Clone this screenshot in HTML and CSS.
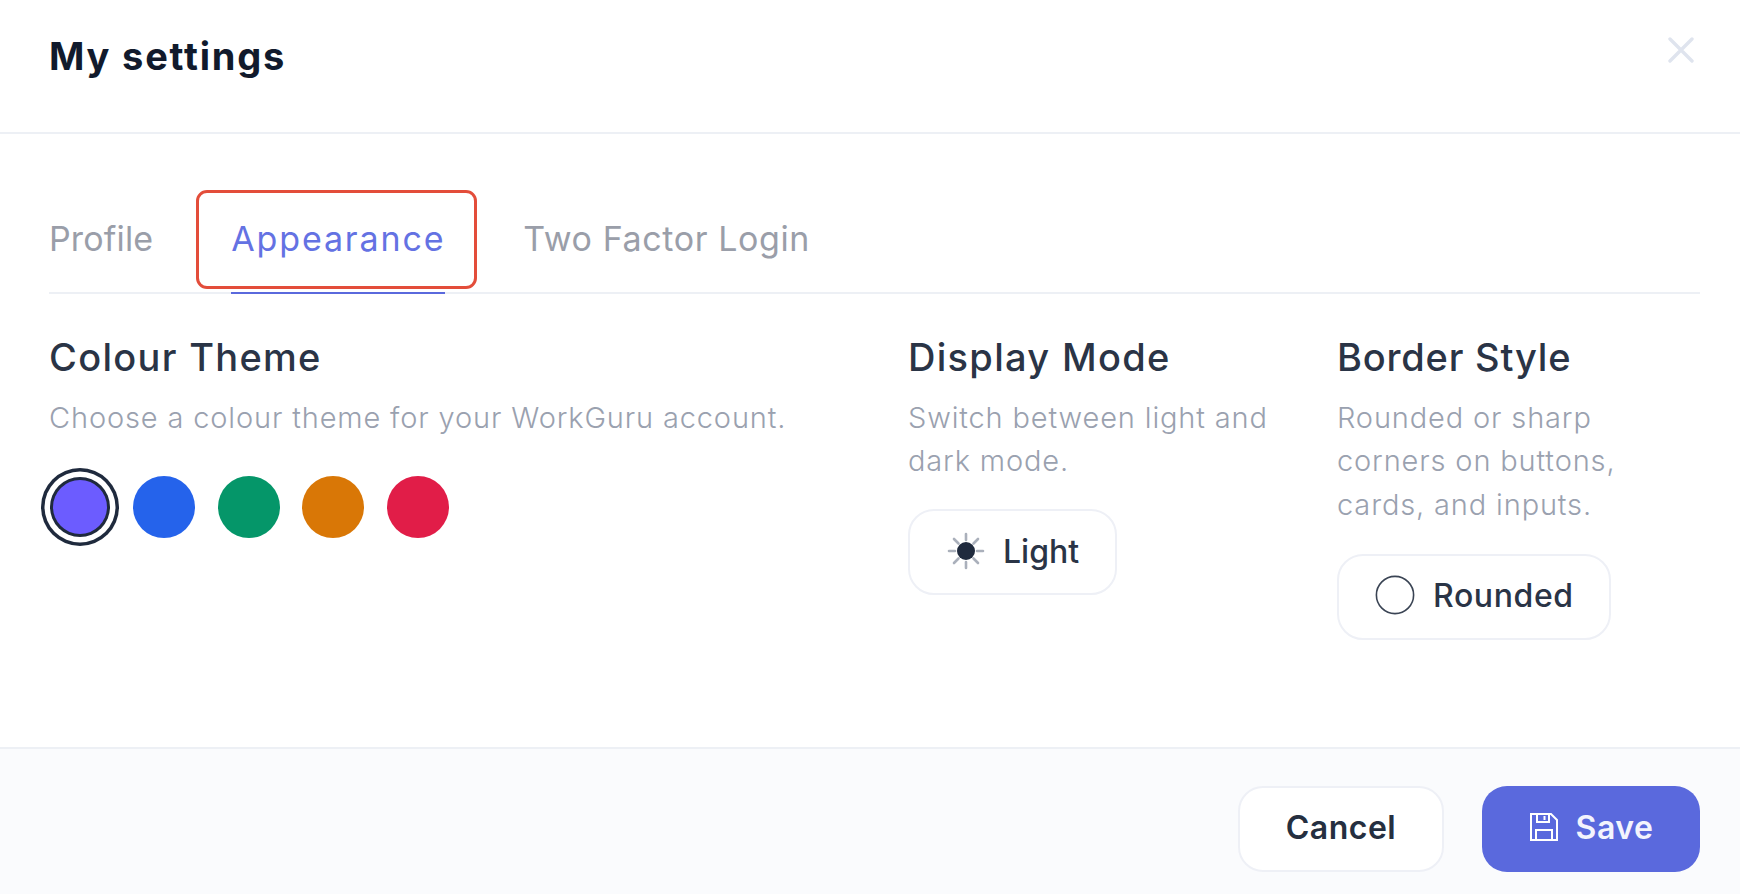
FILE: index.html
```html
<!DOCTYPE html>
<html lang="en">
<head>
<meta charset="utf-8">
<title>My settings</title>
<link rel="stylesheet" href="styles.css">
</head>
<body>
<div class="dialog">
  <header class="dialog-header">
    <h1 class="dialog-title">My settings</h1>
    <button class="close" aria-label="Close">
      <svg width="26" height="26" viewBox="0 0 26 26" fill="none" stroke="#dfe4ee" stroke-width="3.4" stroke-linecap="round"><path d="M2 2 24 24M24 2 2 24"/></svg>
    </button>
  </header>
  <main class="dialog-body">
    <nav class="tabs">
      <a class="tab tab-profile">Profile</a>
      <a class="tab tab-active">Appearance<span class="highlight"></span></a>
      <a class="tab tab-two">Two Factor Login</a>
    </nav>
    <div class="panel">
      <section class="col">
        <h2 class="col-title">Colour Theme</h2>
        <p class="col-desc">Choose a colour theme for your WorkGuru account.</p>
        <div class="swatches">
          <span class="swatch swatch-purple"></span>
          <span class="swatch swatch-blue"></span>
          <span class="swatch swatch-green"></span>
          <span class="swatch swatch-orange"></span>
          <span class="swatch swatch-red"></span>
        </div>
      </section>
      <section class="col">
        <h2 class="col-title">Display Mode</h2>
        <p class="col-desc">Switch between light and<br>dark mode.</p>
        <button class="option option-light">
          <svg width="38" height="38" viewBox="0 0 38 38" fill="none" stroke="#aab0bb" stroke-width="2.6" stroke-linecap="round"><circle cx="19" cy="19" r="9" fill="#1f2a3d" stroke="none"/><path d="M19 2v6M19 30v6M2 19h6M30 19h6M7 7l4.500 4.500M26.500 26.500l4.500 4.500M31 7l-4.500 4.500M11.500 26.500l-4.500 4.500"/></svg>
          <span>Light</span>
        </button>
      </section>
      <section class="col">
        <h2 class="col-title col-title-tight">Border Style</h2>
        <p class="col-desc">Rounded or sharp<br>corners on buttons,<br>cards, and inputs.</p>
        <button class="option option-rounded">
          <svg width="40" height="40" viewBox="0 0 40 40" fill="none" stroke="#3a4454" stroke-width="1.6"><circle cx="20" cy="20" r="18.6"/></svg>
          <span>Rounded</span>
        </button>
      </section>
    </div>
  </main>
  <footer class="dialog-footer">
    <button class="btn btn-cancel">Cancel</button>
    <button class="btn btn-save">
      <svg width="30" height="30" viewBox="0 0 30 30" fill="none" stroke="#fff" stroke-width="2"><path d="M2 2h20l6 6v20H2z"/><path d="M8 2v8h12V2M15.500 4v4M7 28V18h16v10"/></svg>
      <span>Save</span>
    </button>
  </footer>
</div>
</body>
</html>
```
FILE: styles.css
```css
* { box-sizing: border-box; }
html, body { margin: 0; height: 100%; }
body {
  font-family: Inter, "Noto Sans", "Liberation Sans", sans-serif;
  background: #fff;
  color: #1f2a3d;
}
.dialog { display: flex; flex-direction: column; height: 894px; }

.dialog-header {
  height: 134px;
  flex: none;
  display: flex;
  align-items: flex-start;
  justify-content: space-between;
  padding: 31px 46px 0 49px;
  border-bottom: 2px solid #edf0f5;
}
.dialog-title {
  margin: 0;
  font-size: 38px;
  line-height: 50px;
  font-weight: 700;
  letter-spacing: 1.8px;
  color: #111a2c;
}
.close {
  padding: 0;
  margin-top: 6px;
  border: 0;
  background: none;
  display: block;
}

.dialog-body { flex: 1; padding: 0 40px 0 49px; }
.tabs {
  display: flex;
  gap: 78px;
  height: 160px;
  padding-top: 80px;
  border-bottom: 2px solid #edf0f5;
}
.tab {
  position: relative;
  display: block;
  height: 80px;
  font-size: 34px;
  line-height: 50px;
  color: #9a9ea9;
  white-space: nowrap;
}
.tab-profile { letter-spacing: 0.15px; }
.tab-two { letter-spacing: 0.6px; }
.tab-active { color: #6472e3; border-bottom: 2px solid #5a69dd; letter-spacing: 1.85px; }
.highlight {
  position: absolute;
  left: -35px;
  right: -32px;
  top: -24px;
  height: 99px;
  border: 3px solid #e34d3a;
  border-radius: 11px;
}

.panel {
  display: grid;
  grid-template-columns: 811px 381px 1fr;
  column-gap: 48px;
  padding-top: 38px;
}
.col-title {
  margin: 0;
  font-size: 38px;
  line-height: 50px;
  font-weight: 500;
  letter-spacing: 1.3px;
  color: #2a3446;
}
.col-title-tight { letter-spacing: 0.8px; }
.col-desc {
  margin: 14px 0 0;
  font-size: 29px;
  line-height: 43.3px;
  font-weight: 300;
  letter-spacing: 0.85px;
  color: #9aa1af;
  white-space: nowrap;
}
.swatches {
  display: flex;
  align-items: center;
  gap: 22.5px;
  margin-top: 37px;
  margin-left: 2px;
}
.swatch { width: 62px; height: 62px; border-radius: 50%; flex: none; }
.swatch-purple {
  background: #6c5cff;
  box-shadow: 0 0 0 3px #1f2a3d, 0 0 0 8.5px #fff, 0 0 0 12px #1f2a3d;
  width: 54px;
  height: 54px;
  margin: 4px 3.5px 4px 2px;
}
.swatch-blue { background: #2563eb; }
.swatch-green { background: #059669; }
.swatch-orange { background: #d97706; }
.swatch-red { background: #e11d48; }

.option {
  display: flex;
  align-items: center;
  height: 86px;
  padding: 0;
  border: 2px solid #eef0f6;
  border-radius: 26px;
  background: #fff;
  font-family: inherit;
  font-size: 32px;
  font-weight: 500;
  color: #2a3446;
}
.option-light { width: 209px; margin-top: 26px; padding: 0 0 1px 37px; gap: 18px; }
.option-rounded { width: 274px; margin-top: 28px; padding: 0 0 3px 36px; gap: 18px; letter-spacing: 0.6px; }

.dialog-footer {
  flex: none;
  height: 147px;
  display: flex;
  justify-content: flex-end;
  align-items: flex-start;
  gap: 38px;
  padding: 37px 40px 0 0;
  background: #fafbfd;
  border-top: 2px solid #edf0f5;
}
.btn {
  height: 86px;
  display: flex;
  align-items: center;
  justify-content: center;
  padding: 0 0 4px;
  border-radius: 25px;
  font-family: inherit;
  font-size: 32px;
  font-weight: 600;
  letter-spacing: 0.5px;
}
.btn-cancel { width: 206px; background: #fff; border: 2px solid #eef0f6; color: #252f40; }
.btn-save { width: 218px; background: #5a69dd; border: 0; color: #f3f4fd; gap: 17px; }
```
